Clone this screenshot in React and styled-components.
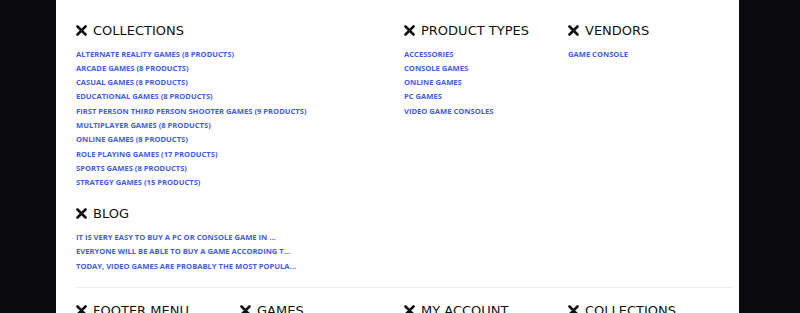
import React from 'react';
import styled, { createGlobalStyle } from 'styled-components';

const GlobalStyle = createGlobalStyle`
  html, body {
    margin: 0;
    padding: 0;
    background: #0b0b0f;
    overflow: hidden;
  }
  body {
    font-family: "DejaVu Sans", "Noto Sans", sans-serif;
  }
`;

const collections = [
  'Alternate Reality Games (8 products)',
  'Arcade Games (8 products)',
  'Casual Games (8 products)',
  'Educational Games (8 products)',
  'First Person Third Person Shooter Games (9 products)',
  'Multiplayer Games (8 products)',
  'Online Games (8 products)',
  'Role Playing Games (17 products)',
  'Sports Games (8 products)',
  'Strategy Games (15 products)',
];

const productTypes = ['Accessories', 'Console Games', 'Online Games', 'PC Games', 'Video Game Consoles'];

const vendors = ['Game Console'];

const posts = [
  'It is very easy to buy a PC or console game in ...',
  'Everyone will be able to buy a game according t...',
  'Today, video games are probably the most popula...',
];

const footerMenus = ['Footer menu', 'Games', 'My account', 'Collections'];

const CloseIcon = () => (
  <svg width="11" height="11" viewBox="0 0 11 11">
    <path d="M1.5 1.5 L9.5 9.5 M9.5 1.5 L1.5 9.5" stroke="#111" strokeWidth="2.6" strokeLinecap="round" />
  </svg>
);

const Section = ({ title, items, span }) => (
  <Block span={span}>
    <Heading>
      <CloseIcon />
      <span>{title}</span>
    </Heading>
    {items && (
      <List>
        {items.map((item) => (
          <Item key={item}>
            <Link href="#">{item}</Link>
          </Item>
        ))}
      </List>
    )}
  </Block>
);

const App = () => (
  <>
    <GlobalStyle />
    <Page>
      <Panel>
        <Grid>
          <Section title="Collections" items={collections} span={2} />
          <Section title="Product Types" items={productTypes} />
          <Section title="Vendors" items={vendors} />
          <Section title="Blog" items={posts} span={2} />
        </Grid>
        <Divider />
        <Grid>
          {footerMenus.map((m) => (
            <Section key={m} title={m} />
          ))}
        </Grid>
      </Panel>
    </Page>
  </>
);

export default App;

const Page = styled.div`
  display: flex;
  padding: 0 61px 0 56px;
  height: 313px;
`;

const Panel = styled.div`
  flex: 1;
  background: #fff;
  padding: 21px 6px 0 20px;
`;

const Grid = styled.div`
  display: grid;
  grid-template-columns: repeat(4, 164px);
  row-gap: 17px;
`;

const Block = styled.div`
  grid-column: span ${(p) => p.span || 1};
`;

const Heading = styled.h3`
  display: flex;
  align-items: center;
  gap: 6px;
  margin: 0;
  height: 18px;
  font-size: 13px;
  font-weight: 400;
  color: #111;
  text-transform: uppercase;
  white-space: nowrap;
`;

const List = styled.ul`
  list-style: none;
  margin: 5.5px 0 0;
  padding: 0;
`;

const Item = styled.li`
  height: 14.3px;
  line-height: 14.3px;
`;

const Link = styled.a`
  font-family: "Open Sans", "Noto Sans", sans-serif;
  font-size: 7.6px;
  font-weight: 700;
  color: #3f5ce8;
  text-decoration: none;
  text-transform: uppercase;
  white-space: nowrap;
`;

const Divider = styled.hr`
  border: 0;
  border-top: 1px solid #ececec;
  margin: 16px 0 14px;
`;
